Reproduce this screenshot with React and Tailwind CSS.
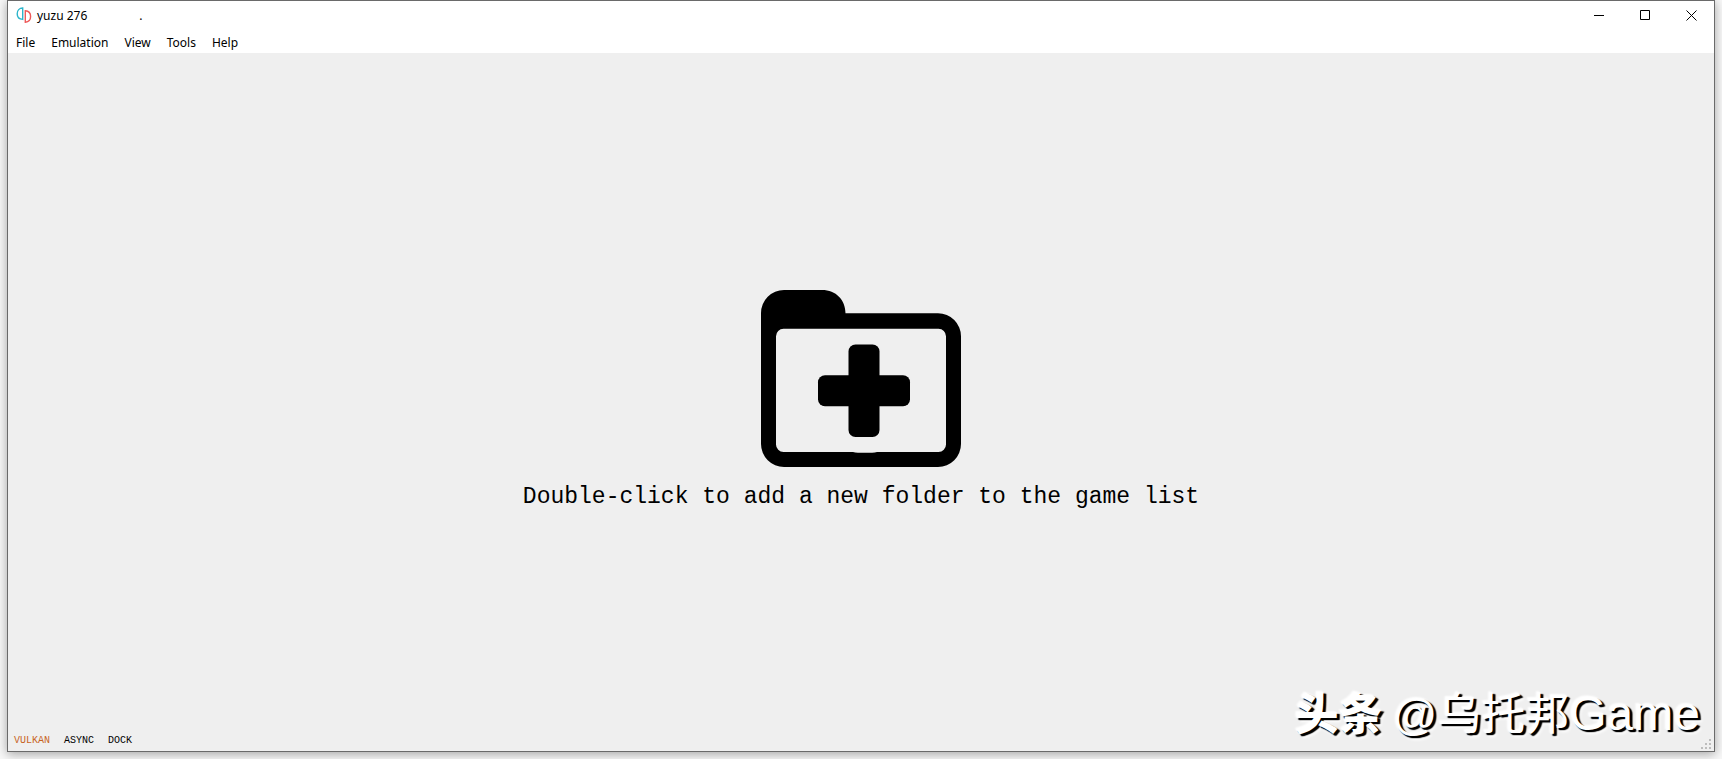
import React from "react";

const menus = ["File", "Emulation", "View", "Tools", "Help"];

function YuzuLogo() {
  return (
    <svg viewBox="0 0 16 16" className="h-4 w-4" fill="none" strokeWidth="1.4" aria-hidden="true">
      <path d="M6.7 1 V12.4 C3 12.2 1.2 9.8 1.2 6.7 S3.4 1.1 6.7 1Z" stroke="#2cb5cb" />
      <path d="M9.3 3.8 V15.2 C12.7 14.9 14.6 12.6 14.6 9.5 S12.6 4 9.3 3.8Z" stroke="#ee5a5a" />
    </svg>
  );
}

function WindowButton({ label, children }) {
  return (
    <button type="button" aria-label={label} className="flex h-7 w-[46px] items-center justify-center">
      <svg viewBox="0 0 11 11" className="h-[11px] w-[11px]" fill="none" stroke="#000" strokeWidth="1">
        {children}
      </svg>
    </button>
  );
}

function TitleBar() {
  return (
    <header className="flex h-7 items-center justify-between bg-white pl-2">
      <div className="flex items-center gap-[5px]">
        <YuzuLogo />
        <div className="flex gap-[52px] pt-[2px] text-xs">
          <h1>yuzu 276</h1>
          <span>.</span>
        </div>
      </div>
      <div className="flex">
        <WindowButton label="Minimize">
          <path d="M0 5.5H10" />
        </WindowButton>
        <WindowButton label="Maximize">
          <path d="M0.5 0.5H9.5V9.5H0.5Z" />
        </WindowButton>
        <WindowButton label="Close">
          <path d="M0.5 0.5L10.5 10.5M10.5 0.5L0.5 10.5" />
        </WindowButton>
      </div>
    </header>
  );
}

function FolderPlus() {
  return (
    <svg viewBox="0 0 200 177" className="h-[177px] w-[200px]" aria-hidden="true">
      <path
        fillRule="evenodd"
        d="M23 0H61C75 0 84.5 10 84.5 23.3H177A23 23 0 0 1 200 46.3V154A23 23 0 0 1 177 177H23A23 23 0 0 1 0 154V23A23 23 0 0 1 23 0ZM22.5 38.7A7.5 7.5 0 0 0 15 46.2V154.5A7.5 7.5 0 0 0 22.5 162H92Q94 162.7 97 162.7H111Q114 162.7 116 162H177.5A7.5 7.5 0 0 0 185 154.5V46.2A7.5 7.5 0 0 0 177.5 38.7Z"
      />
      <rect x="57" y="85.3" width="92" height="31" rx="7" />
      <rect x="87.5" y="54.5" width="31" height="92.5" rx="7" />
    </svg>
  );
}

function ResizeGrip() {
  const dots = [[8, 0], [4, 4], [8, 4], [0, 8], [4, 8], [8, 8]];
  return (
    <svg viewBox="0 0 10 10" className="absolute right-[3px] bottom-[2px] h-[10px] w-[10px]" fill="#bcbcbc" aria-hidden="true">
      {dots.map(([x, y]) => (
        <rect key={`${x}-${y}`} x={x} y={y} width="2" height="2" />
      ))}
    </svg>
  );
}

export default function App() {
  return (
    <div className="flex h-screen flex-col overflow-hidden bg-[#f8f8f8] px-[7px] pb-[7px] font-['Noto_Sans','Noto_Sans_CJK_SC',sans-serif] text-black">
      <div className="relative flex flex-1 flex-col border border-[#6a6a6a] bg-[#efefef] shadow-[0_2px_10px_rgba(0,0,0,0.35)]">
        <TitleBar />
        <nav className="flex h-6 bg-white">
          {menus.map((name) => (
            <button key={name} type="button" className="px-2 pt-1 text-xs">
              {name}
            </button>
          ))}
        </nav>
        <main className="flex flex-1 items-center justify-center pt-[22px]">
          <button type="button" className="flex flex-col items-center gap-[14px]">
            <FolderPlus />
            <span className="font-['Liberation_Mono',monospace] text-[23px] leading-8">
              Double-click to add a new folder to the game list
            </span>
          </button>
        </main>
        <footer className="flex h-6 items-center gap-[14px] px-[6px] pt-[2px] font-['Liberation_Mono',monospace] text-[10px]">
          <button type="button" className="text-[#c8641e]">VULKAN</button>
          <button type="button">ASYNC</button>
          <button type="button">DOCK</button>
        </footer>
        <p className="absolute right-[14px] bottom-1 flex items-baseline text-[44px] leading-[64px] whitespace-pre text-white [text-shadow:2px_2px_1px_#000,3px_2px_1px_#000,-1px_-1px_2px_#fff,4px_4px_3px_#fff]">
          <span className="font-['Noto_Sans_CJK_SC',sans-serif] font-black">头条 </span>
          <span className="font-['Liberation_Sans','Noto_Sans_CJK_SC',sans-serif]">@乌托邦</span>
          <span className="font-['Liberation_Sans',sans-serif] text-5xl leading-[64px]">Game</span>
        </p>
        <ResizeGrip />
      </div>
    </div>
  );
}
